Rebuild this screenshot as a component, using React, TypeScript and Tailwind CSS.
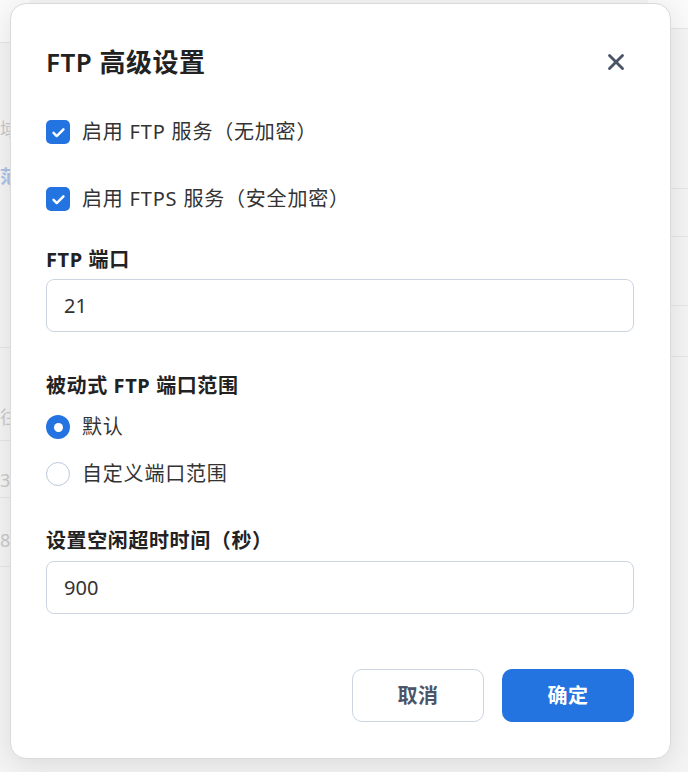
import { X } from 'lucide-react';

// =============================================================================
// FTP advanced settings dialog over a faded settings page
// =============================================================================

const FONT = '"Noto Sans", "Noto Sans CJK SC", sans-serif';

function Checkbox({ label }: { label: string }) {
  return (
    <label className="flex h-8 items-center gap-[12px]">
      <span className="flex h-[24px] w-[24px] items-center justify-center rounded-[5px] bg-[#2374e1]">
        <svg viewBox="0 0 24 24" className="h-[17px] w-[17px]" fill="none" stroke="white" strokeWidth={3.4} strokeLinecap="round" strokeLinejoin="round">
          <path d="M5 12.5l4.5 4.5L19 7.5" />
        </svg>
      </span>
      <span className="text-[20px] tracking-[0.8px] text-[#333]">{label}</span>
    </label>
  );
}

function Radio({ label, checked }: { label: string; checked?: boolean }) {
  return (
    <label className="flex h-8 items-center gap-[12px]">
      {checked ? (
        <span className="flex h-6 w-6 items-center justify-center rounded-full bg-[#2374e1]">
          <span className="h-[9px] w-[9px] rounded-full bg-white" />
        </span>
      ) : (
        <span className="h-6 w-6 rounded-full border-[1.5px] border-[#b9c8dc] bg-white" />
      )}
      <span className="text-[20px] tracking-[0.8px] text-[#333]">{label}</span>
    </label>
  );
}

function Field({ value }: { value: string }) {
  return (
    <div className="flex h-[53px] items-center rounded-[8px] border border-[#cbd5e1] bg-white px-[17px] text-[20px] text-[#333]">
      {value}
    </div>
  );
}

export default function App() {
  return (
    <div className="relative h-[772px] w-[688px] overflow-hidden bg-[#f4f4f4]" style={{ fontFamily: FONT }}>
      {/* Background page (mostly hidden behind the dialog) */}
      <div className="flex h-full">
        <div className="flex w-[30px] flex-col text-right text-[18px]">
          <div className="h-[43px] border-b border-[#e6e6e6] bg-[#fafafa]" />
          <div className="h-[305px] border-b border-[#e6e6e6] pr-[18px] pt-[73px]">
            <div className="text-[#c9c9c9]">域</div>
            <div className="mt-[20px] font-bold text-[#a9c3e8]">范</div>
          </div>
          <div className="h-[93px] border-b border-[#e6e6e6] pr-[18px] pt-[56px] text-[#c9c9c9]">往</div>
          <div className="h-[57px] border-b border-[#e6e6e6] pr-[20px] pt-[26px] text-[#c9c9c9]">3:</div>
          <div className="h-[69px] border-b border-[#e6e6e6] pr-[20px] pt-[29px] text-[#c9c9c9]">8</div>
          <div className="flex-1" />
        </div>
        <div className="flex-1" />
        <div className="flex w-[40px] flex-col">
          <div className="h-[28px] bg-[#fafafa]" />
          <div className="h-[160px] border-t border-[#e6e6e6]" />
          <div className="h-[48px] border-t border-[#e6e6e6]" />
          <div className="h-[69px] border-t border-[#e6e6e6]" />
          <div className="h-[51px] border-t border-[#e6e6e6]" />
          <div className="flex-1 border-t border-[#e6e6e6]" />
        </div>
      </div>

      {/* Dialog */}
      <div className="absolute left-[10px] top-[3px] flex h-[756px] w-[661px] flex-col rounded-[16px] border border-[#dadada] bg-white pl-[35px] pr-[36px] pt-[42px] shadow-[0_6px_28px_rgba(0,0,0,0.10)]">
        <div className="flex h-8 items-center justify-between">
          <h2 className="text-[26px] font-bold tracking-[0.5px] text-[#222]">
            <span className="font-semibold">FTP</span> 高级设置
          </h2>
          <button className="mr-[5px] text-[#4b5567]">
            <X size={26} strokeWidth={2.6} />
          </button>
        </div>

        <div className="mt-[38px]">
          <Checkbox label="启用 FTP 服务（无加密）" />
        </div>
        <div className="mt-[35px]">
          <Checkbox label="启用 FTPS 服务（安全加密）" />
        </div>

        <div className="mt-[32px] text-[20px] font-bold leading-[26px] tracking-[0.6px] text-[#222]">FTP 端口</div>
        <div className="mt-[6px]">
          <Field value="21" />
        </div>

        <div className="mt-[41px] text-[20px] font-bold leading-[26px] tracking-[0.6px] text-[#222]">被动式 FTP 端口范围</div>
        <div className="mt-[12px]">
          <Radio label="默认" checked />
        </div>
        <div className="mt-[15px]">
          <Radio label="自定义端口范围" />
        </div>

        <div className="mt-[38px] text-[20px] font-bold leading-[26px] tracking-[0.6px] text-[#222]">设置空闲超时时间（秒）</div>
        <div className="mt-[7px]">
          <Field value="900" />
        </div>

        <div className="mt-[55px] flex justify-end gap-[18px]">
          <button className="h-[53px] w-[132px] rounded-[10px] border border-[#cbd5e1] bg-white text-[20px] font-bold tracking-[0.6px] text-[#4b5567]">
            取消
          </button>
          <button className="h-[53px] w-[132px] rounded-[10px] bg-[#2374e1] text-[20px] font-bold tracking-[0.6px] text-white">
            确定
          </button>
        </div>
      </div>
    </div>
  );
}
